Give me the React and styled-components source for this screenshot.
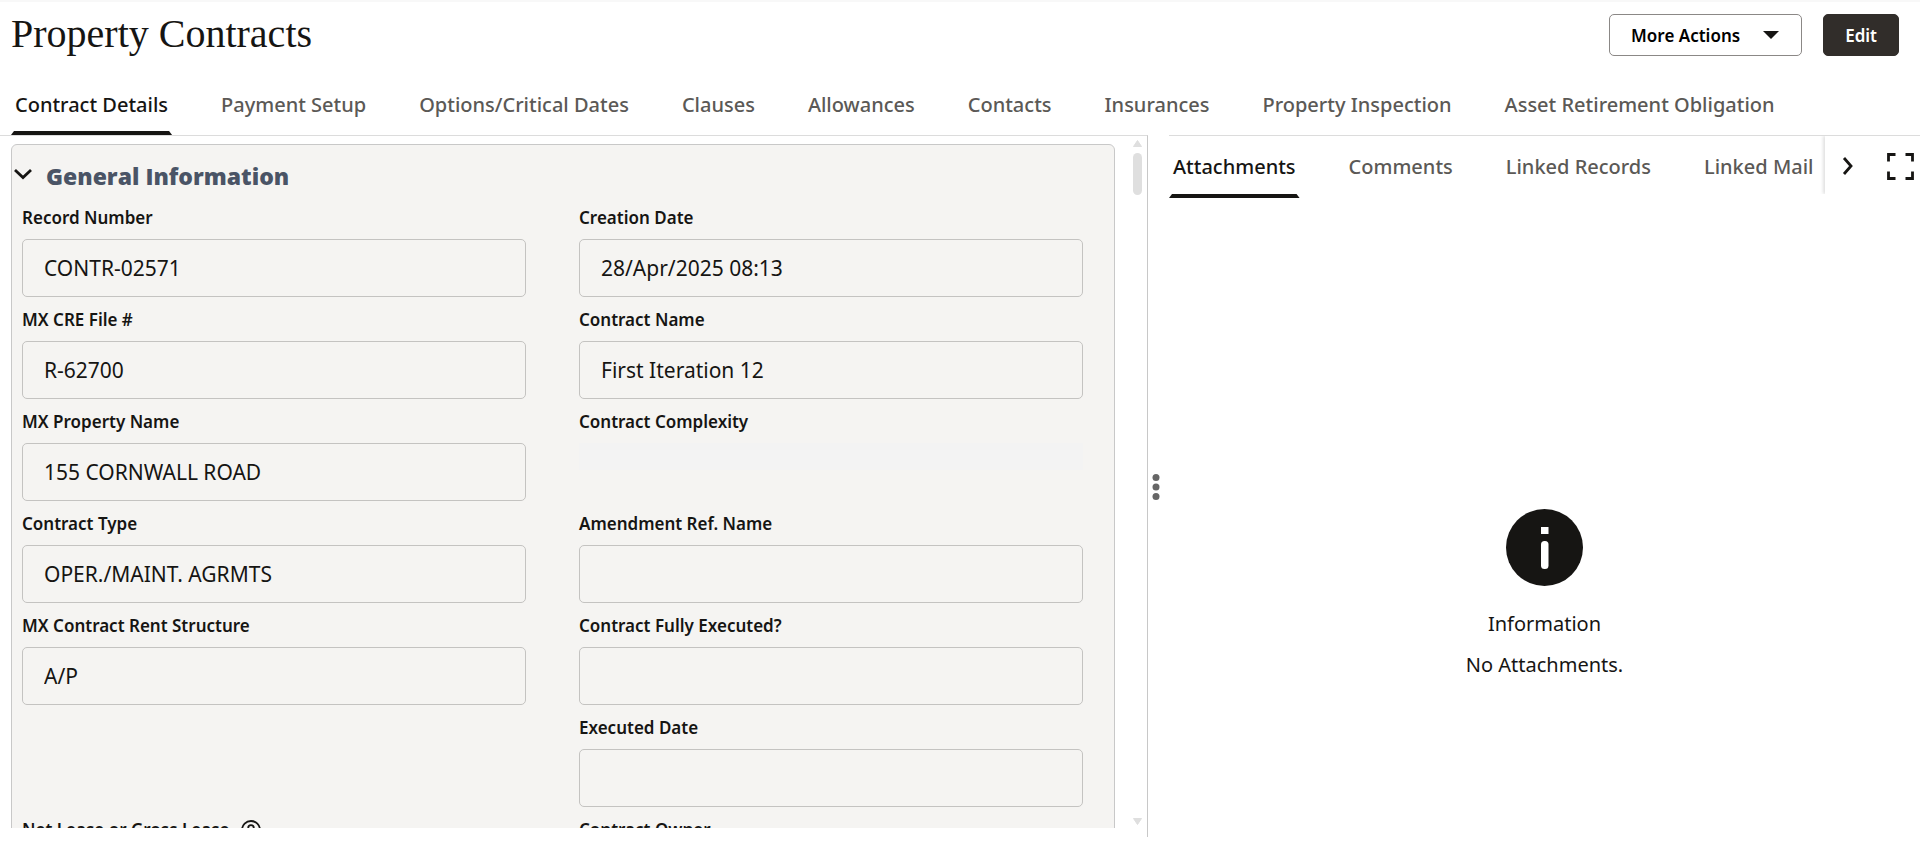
import React from 'react';
import styled, { createGlobalStyle } from 'styled-components';

const ink = '#161513';
const muted = '#5b5956';
const line = '#dcdcdc';
const panelLine = '#c8c8c8';

const GlobalStyle = createGlobalStyle`
  *, *::before, *::after { box-sizing: border-box; }
  body {
    margin: 0;
    background: #fff;
    color: ${ink};
    font-family: "Noto Sans", "Open Sans", sans-serif;
  }
  button, input { font-family: inherit; color: inherit; }
`;

const Page = styled.div`
  display: flex;
  flex-direction: column;
  height: 100vh;
  border-top: 2px solid #f8f8f8;
`;

const Header = styled.header`
  display: flex;
  align-items: flex-start;
  justify-content: space-between;
  padding: 12px 21px 0 11px;
  height: 70px;
`;

const Title = styled.h1`
  margin: 0;
  font-family: "Liberation Serif", serif;
  font-size: 40px;
  font-weight: 400;
  line-height: 40px;
`;

const Actions = styled.div`
  display: flex;
  gap: 21px;
`;

const Button = styled.button`
  display: flex;
  align-items: center;
  gap: 22px;
  height: 42px;
  padding: 2px 21px 0;
  border: 1px solid ${(p) => (p.$primary ? '#312d2a' : '#8b8886')};
  border-radius: 5px;
  background: ${(p) => (p.$primary ? '#312d2a' : '#fff')};
  color: ${(p) => (p.$primary ? '#fff' : '#000')};
  font-size: 17px;
  font-weight: 600;
  line-height: 24px;
`;

const Tabs = styled.nav`
  display: flex;
  flex: 1;
  gap: 45px;
  min-width: 0;
  overflow: hidden;
  padding-left: ${(p) => p.$inset || 0}px;
`;

const Tab = styled.button`
  position: relative;
  flex: none;
  height: ${(p) => (p.$compact ? 62 : 63)}px;
  padding: ${(p) => (p.$compact ? '0 4px' : '2px 4px 0')};
  border: 0;
  background: none;
  color: ${(p) => (p.$active ? ink : muted)};
  font-size: 20px;
  font-weight: 500;
  line-height: 28px;

  &::after {
    content: "";
    display: ${(p) => (p.$active ? 'block' : 'none')};
    position: absolute;
    left: 0;
    right: 0;
    bottom: 0;
    height: 4px;
    background: ${ink};
    clip-path: polygon(3px 0, calc(100% - 3px) 0, 100% 100%, 0 100%);
  }
`;

const MainTabs = styled.div`
  display: flex;
`;

const Split = styled.main`
  display: grid;
  grid-template-columns: minmax(0, 1148fr) 21px minmax(0, 751fr);
  flex: 1;
  min-height: 0;
`;

const FormPane = styled.section`
  display: flex;
  margin-bottom: 6px;
  padding: 0 5px 9px 11px;
  border-top: 1px solid ${line};
  border-right: 1px solid ${panelLine};
  min-height: 0;
`;

const FormScroll = styled.div`
  flex: 1;
  min-width: 0;
  padding-top: 8px;
  overflow: hidden;
`;

const Card = styled.div`
  padding: 15px 31px 24px 10px;
  border: 1px solid ${panelLine};
  border-radius: 6px;
  background: #f5f4f2;
`;

const CardToggle = styled.button`
  display: flex;
  align-items: center;
  gap: 13px;
  height: 32px;
  margin-left: -9px;
  padding: 0;
  border: 0;
  background: none;
`;

const CardTitle = styled.span`
  color: #4a5466;
  font-family: "Open Sans", "Noto Sans", sans-serif;
  font-size: 23px;
  font-weight: 800;
  line-height: 32px;
`;

const Fields = styled.div`
  display: grid;
  grid-template-columns: 1fr 1fr;
  gap: 12px 53px;
  padding-top: 15px;
`;

const Field = styled.div`
  display: flex;
  flex-direction: column;
  gap: 10px;
  height: 90px;
`;

const LabelRow = styled.div`
  display: flex;
  align-items: center;
  gap: 11px;
  height: 22px;
`;

const Label = styled.label`
  font-size: 17px;
  font-weight: 600;
  line-height: 22px;
`;

const Value = styled.input`
  width: 100%;
  height: 58px;
  padding: 0 21px;
  border: 1px solid #c4c3c1;
  border-radius: 5px;
  background: transparent;
  font-size: 21px;
  outline: 0;
`;

const EmptyValue = styled.output`
  height: 27px;
  background: #f3f3f3;
`;

const Scrollbar = styled.div`
  display: flex;
  flex-direction: column;
  align-items: center;
  width: 9px;
  margin: 4px 0 3px 18px;
`;

const Thumb = styled.div`
  width: 9px;
  height: 42px;
  margin: 6px 0 auto;
  border-radius: 5px;
  background: #dfdfdf;
`;

const Splitter = styled.div`
  display: flex;
  align-items: center;
  padding: 0 0 5px 4px;
`;

const SidePane = styled.aside`
  display: flex;
  flex-direction: column;
  border-top: 1px solid ${line};
`;

const SideBar = styled.div`
  display: flex;
  align-items: flex-start;
`;

const SideControls = styled.div`
  display: flex;
  align-items: center;
  justify-content: space-between;
  flex: none;
  width: 95px;
  height: 58px;
  padding: 2px 6px 0 17px;
  box-shadow: -2px 0 3px rgba(0, 0, 0, 0.12);
  clip-path: inset(0 0 0 -6px);
`;

const IconButton = styled.button`
  display: flex;
  padding: 0;
  border: 0;
  background: none;
`;

const EmptyState = styled.div`
  display: flex;
  flex-direction: column;
  align-items: center;
  padding-top: 311px;
  font-size: 20px;
  line-height: 41px;
`;

const InfoIcon = styled.svg`
  display: block;
  margin-bottom: 17px;
`;

const Message = styled.p`
  margin: 0;
`;

const mainTabs = [
  'Contract Details',
  'Payment Setup',
  'Options/Critical Dates',
  'Clauses',
  'Allowances',
  'Contacts',
  'Insurances',
  'Property Inspection',
  'Asset Retirement Obligation',
];

const sideTabs = ['Attachments', 'Comments', 'Linked Records', 'Linked Mail'];

const fields = [
  { label: 'Record Number', value: 'CONTR-02571' },
  { label: 'Creation Date', value: '28/Apr/2025 08:13' },
  { label: 'MX CRE File #', value: 'R-62700' },
  { label: 'Contract Name', value: 'First Iteration 12' },
  { label: 'MX Property Name', value: '155 CORNWALL ROAD' },
  { label: 'Contract Complexity', blank: true },
  { label: 'Contract Type', value: 'OPER./MAINT. AGRMTS' },
  { label: 'Amendment Ref. Name', value: '' },
  { label: 'MX Contract Rent Structure', value: 'A/P' },
  { label: 'Contract Fully Executed?', value: '' },
  null,
  { label: 'Executed Date', value: '' },
  { label: 'Net Lease or Gross Lease', value: '', help: true },
  { label: 'Contract Owner', value: '' },
];

function HelpIcon() {
  return (
    <svg width="20" height="20" viewBox="0 0 20 20" fill="none" stroke={ink} strokeWidth="1.8" aria-hidden="true">
      <circle cx="10" cy="10" r="9" />
      <path d="M7.200 8.500V8a2.800 2.800 0 0 1 5.600 0c0 2-2.800 2-2.800 4.200" />
      <path d="M10 14v2" />
    </svg>
  );
}

function FormField({ id, field }) {
  return (
    <Field>
      <LabelRow>
        <Label htmlFor={id}>{field.label}</Label>
        {field.help && <HelpIcon />}
      </LabelRow>
      {field.blank ? <EmptyValue id={id} /> : <Value id={id} value={field.value} readOnly />}
    </Field>
  );
}

export default function App() {
  return (
    <Page>
      <GlobalStyle />
      <Header>
        <Title>Property Contracts</Title>
        <Actions>
          <Button type="button">
            More Actions
            <svg width="18" height="10" viewBox="0 0 18 10" aria-hidden="true">
              <path d="M1 0h16l-8 8z" fill={ink} />
            </svg>
          </Button>
          <Button type="button" $primary>Edit</Button>
        </Actions>
      </Header>
      <MainTabs>
        <Tabs $inset={11}>
          {mainTabs.map((name, i) => (
            <Tab key={name} type="button" $active={i === 0}>{name}</Tab>
          ))}
        </Tabs>
      </MainTabs>
      <Split>
        <FormPane>
          <FormScroll>
            <Card>
              <CardToggle type="button" aria-expanded="true">
                <svg width="20" height="20" viewBox="0 0 20 20" fill="none" aria-hidden="true">
                  <path d="M2 4l8 7.500L18 4" stroke={ink} strokeWidth="2.800" />
                </svg>
                <CardTitle>General Information</CardTitle>
              </CardToggle>
              <Fields>
                {fields.map((field, i) =>
                  field ? <FormField key={field.label} id={`field-${i}`} field={field} /> : <div key={i} />
                )}
              </Fields>
            </Card>
          </FormScroll>
          <Scrollbar>
            <svg width="9" height="7" viewBox="0 0 9 7" aria-hidden="true">
              <path d="M4.500 .5L8.500 6.500h-8z" fill="#dfdfdf" stroke="#dfdfdf" strokeLinejoin="round" />
            </svg>
            <Thumb />
            <svg width="9" height="7" viewBox="0 0 9 7" aria-hidden="true">
              <path d="M4.500 6.500L8.500 .5h-8z" fill="#dfdfdf" stroke="#dfdfdf" strokeLinejoin="round" />
            </svg>
          </Scrollbar>
        </FormPane>
        <Splitter>
          <svg width="8" height="28" viewBox="0 0 8 28" fill="#666" aria-hidden="true">
            <circle cx="4" cy="4.500" r="3.500" />
            <circle cx="4" cy="14" r="3.500" />
            <circle cx="4" cy="23.500" r="3.500" />
          </svg>
        </Splitter>
        <SidePane>
          <SideBar>
            <Tabs>
              {sideTabs.map((name, i) => (
                <Tab key={name} type="button" $compact $active={i === 0}>{name}</Tab>
              ))}
            </Tabs>
            <SideControls>
              <IconButton type="button" aria-label="Next tabs">
                <svg width="12" height="20" viewBox="0 0 12 20" fill="none" aria-hidden="true">
                  <path d="M2 2l7 8-7 8" stroke={ink} strokeWidth="2.800" />
                </svg>
              </IconButton>
              <IconButton type="button" aria-label="Expand panel">
                <svg width="27" height="27" viewBox="0 0 27 27" fill="none" stroke={ink} strokeWidth="2.800" aria-hidden="true">
                  <path d="M1.500 8.500v-7H8.500M18.500 1.500h7v7M25.500 18.500v7h-7M8.500 25.500h-7v-7" />
                </svg>
              </IconButton>
            </SideControls>
          </SideBar>
          <EmptyState>
            <InfoIcon width="77" height="77" viewBox="0 0 77 77" aria-hidden="true">
              <circle cx="38.500" cy="38.500" r="38.500" fill={ink} />
              <rect x="35" y="18" width="7.500" height="7" fill="#fff" />
              <rect x="35" y="32" width="7.500" height="28" rx="3.500" fill="#fff" />
            </InfoIcon>
            <Message>Information</Message>
            <Message>No Attachments.</Message>
          </EmptyState>
        </SidePane>
      </Split>
    </Page>
  );
}
